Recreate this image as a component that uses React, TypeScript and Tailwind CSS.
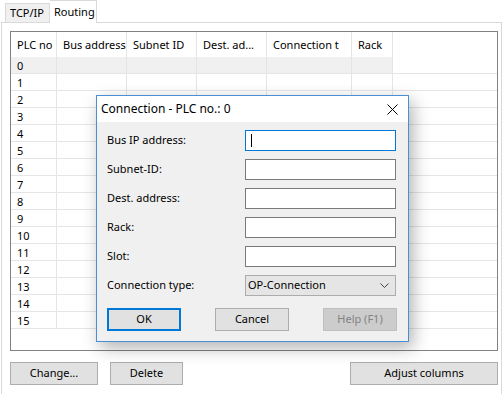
import React from 'react';

const columns = [
  { title: 'PLC no', w: 'w-[46px]' },
  { title: 'Bus address', w: 'w-[70px]' },
  { title: 'Subnet ID', w: 'w-[70px]' },
  { title: 'Dest. ad...', w: 'w-[70px]' },
  { title: 'Connection t', w: 'w-[85px]' },
  { title: 'Rack', w: 'w-[41px]' },
];

const rows = Array.from({ length: 16 }, (_, i) => i);

const fields = ['Bus IP address:', 'Subnet-ID:', 'Dest. address:', 'Rack:', 'Slot:'];

function WinButton({ label, className = '' }: { label: string; className?: string }) {
  return (
    <button className={`h-[23px] bg-[#e1e1e1] border border-[#adadad] text-[11px] text-black ${className}`}>
      {label}
    </button>
  );
}

function ConnectionDialog() {
  return (
    <div className="absolute left-[96px] top-[95px] w-[313px] border border-[#4a8fd3] bg-[#f0f0f0] shadow-[4px_6px_16px_rgba(0,0,0,0.3)]">
      {/* Title bar */}
      <div className="h-[26px] bg-white flex items-center justify-between pl-[4px] pr-[10px]">
        <span className="text-[12px]">Connection - PLC no.: 0</span>
        <svg width="11" height="11" viewBox="0 0 11 11" className="mt-[1px]">
          <path d="M0.5 0.5 L10.5 10.5 M10.5 0.5 L0.5 10.5" stroke="#000" strokeWidth="1" />
        </svg>
      </div>

      {/* Body */}
      <div className="pt-[8px] pb-[10px] pl-[10px] flex flex-col gap-[8px]">
        {fields.map((label, i) => (
          <div key={label} className="flex items-center h-[21px]">
            <span className="w-[138px] text-[11px]">{label}</span>
            <div
              className={`w-[151px] h-[21px] bg-white border flex items-center ${
                i === 0 ? 'border-[#0078d7]' : 'border-[#7a7a7a]'
              }`}
            >
              {i === 0 && <div className="ml-[5px] w-px h-[13px] bg-black" />}
            </div>
          </div>
        ))}
        <div className="flex items-center h-[21px]">
          <span className="w-[138px] text-[11px]">Connection type:</span>
          <div className="w-[151px] h-[21px] bg-[#e5e5e5] border border-[#acacac] flex items-center justify-between pl-[2px] pr-[6px]">
            <span className="text-[11px]">OP-Connection</span>
            <svg width="9" height="5" viewBox="0 0 9 5">
              <path d="M0.5 0.5 L4.5 4.5 L8.5 0.5" stroke="#444" strokeWidth="1" fill="none" />
            </svg>
          </div>
        </div>

        <div className="flex items-center mt-[4px] h-[23px]">
          <button className="w-[74px] h-[23px] bg-[#e1e1e1] border-2 border-[#0078d7] text-[11px]">OK</button>
          <WinButton label="Cancel" className="w-[74px] ml-[34px]" />
          <button className="w-[74px] h-[23px] ml-[34px] bg-[#cccccc] border border-[#bfbfbf] text-[11px] text-[#838383]">
            Help (F1)
          </button>
        </div>
      </div>
    </div>
  );
}

export default function App() {
  return (
    <div
      className="relative w-[504px] h-[394px] overflow-hidden bg-white text-black"
      style={{ fontFamily: '"Noto Sans", "Open Sans", sans-serif' }}
    >
      {/* Tabs */}
      <div className="flex items-end h-[22px] pl-[5px]">
        <div className="h-[19px] w-[45px] bg-[#f0f0f0] border border-b-0 border-[#d9d9d9] text-[11px] flex items-center pl-[4px]">
          TCP/IP
        </div>
        <div className="relative z-10 -mb-px h-[23px] w-[47px] bg-white border border-b-0 border-l-0 border-[#d9d9d9] text-[11px] flex items-start pt-[3px] pl-[4px]">
          Routing
        </div>
      </div>

      {/* Tab page */}
      <div className="ml-px w-[501px] h-[380px] border border-[#d9d9d9] pt-[8px] pl-[8px]">
        {/* Grid */}
        <div className="w-[488px] h-[320px] border border-[#828282] bg-white">
          <div className="flex h-[25px]">
            {columns.map((c) => (
              <div key={c.title} className={`${c.w} shrink-0 border-r border-[#e5e5e5] text-[11px] pl-[6px] pt-[2px] flex items-center whitespace-nowrap overflow-hidden`}>
                {c.title}
              </div>
            ))}
          </div>
          {rows.map((r) => (
            <div key={r} className="flex h-[17px] border-b border-[#e5e5e5]">
              {columns.map((c, ci) => (
                <div
                  key={c.title}
                  className={`${c.w} shrink-0 border-r border-[#e5e5e5] text-[11px] pl-[6px] flex items-center leading-none ${
                    r === 0 ? 'bg-[#f0f0f0]' : ''
                  }`}
                >
                  {ci === 0 ? r : ''}
                </div>
              ))}
            </div>
          ))}
        </div>

        {/* Bottom buttons */}
        <div className="flex mt-[11px] pr-[3px]">
          <WinButton label="Change..." className="w-[88px]" />
          <WinButton label="Delete" className="w-[73px] ml-[12px]" />
          <WinButton label="Adjust columns" className="w-[148px] ml-auto" />
        </div>
      </div>

      <ConnectionDialog />
    </div>
  );
}
